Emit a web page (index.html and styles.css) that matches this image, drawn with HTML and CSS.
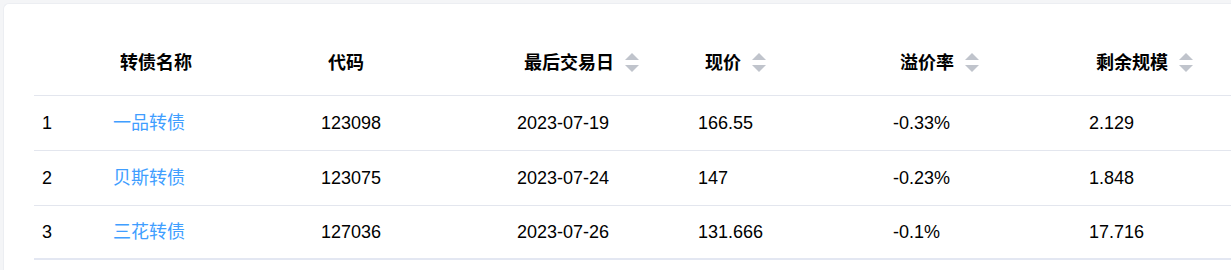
FILE: index.html
```html
<!DOCTYPE html>
<html lang="zh-CN">
<head>
<meta charset="utf-8">
<title>转债列表</title>
<link rel="stylesheet" href="styles.css">
</head>
<body>
<div class="card">
  <table class="bond-table">
    <colgroup>
      <col class="c-idx"><col class="c-name"><col class="c-code"><col class="c-date"><col class="c-price"><col class="c-prem"><col class="c-size">
    </colgroup>
    <thead>
      <tr>
        <th></th>
        <th>转债名称</th>
        <th>代码</th>
        <th>最后交易日<svg class="sort" viewBox="0 0 14 19" width="14" height="19"><polygon points="7,0 14,7 0,7"/><polygon points="0,12 14,12 7,19"/></svg></th>
        <th>现价<svg class="sort" viewBox="0 0 14 19" width="14" height="19"><polygon points="7,0 14,7 0,7"/><polygon points="0,12 14,12 7,19"/></svg></th>
        <th>溢价率<svg class="sort" viewBox="0 0 14 19" width="14" height="19"><polygon points="7,0 14,7 0,7"/><polygon points="0,12 14,12 7,19"/></svg></th>
        <th>剩余规模<svg class="sort" viewBox="0 0 14 19" width="14" height="19"><polygon points="7,0 14,7 0,7"/><polygon points="0,12 14,12 7,19"/></svg></th>
      </tr>
    </thead>
    <tbody>
      <tr>
        <td>1</td><td><a class="bond-link" href="#">一品转债</a></td><td>123098</td><td>2023-07-19</td><td>166.55</td><td>-0.33%</td><td>2.129</td>
      </tr>
      <tr>
        <td>2</td><td><a class="bond-link" href="#">贝斯转债</a></td><td>123075</td><td>2023-07-24</td><td>147</td><td>-0.23%</td><td>1.848</td>
      </tr>
      <tr class="last">
        <td>3</td><td><a class="bond-link" href="#">三花转债</a></td><td>127036</td><td>2023-07-26</td><td>131.666</td><td>-0.1%</td><td>17.716</td>
      </tr>
    </tbody>
  </table>
</div>
</body>
</html>
```
FILE: styles.css
```css
html, body {
  margin: 0;
  padding: 0;
}
body {
  background: #f4f5f7;
  overflow: hidden;
  height: 270px;
  font-family: "Liberation Sans", "Noto Sans CJK SC", sans-serif;
  color: #111;
}
.card {
  margin: 3px 0 0 3px;
  width: 1228px;
  height: 267px;
  background: #fff;
  border: 1px solid #eceef2;
  border-right: none;
  border-bottom: none;
  border-radius: 6px 0 0 0;
  padding: 22px 0 0 30px;
  box-sizing: border-box;
}
.bond-table {
  border-collapse: collapse;
  table-layout: fixed;
  width: 1197px;
  font-size: 18px;
}
.c-idx { width: 71px; }
.c-name { width: 208px; }
.c-code { width: 196px; }
.c-date { width: 181px; }
.c-price { width: 195px; }
.c-prem { width: 196px; }
.c-size { width: 150px; }

.bond-table th {
  height: 69px;
  padding: 0 0 0 15px;
  text-align: left;
  font-weight: bold;
  color: #000;
  border-bottom: 1px solid #e3e6ee;
  white-space: nowrap;
  vertical-align: middle;
}
.bond-table td {
  height: 54px;
  padding: 0 0 0 8px;
  border-bottom: 1px solid #e3e6ee;
  color: #000;
  white-space: nowrap;
  vertical-align: middle;
  line-height: 20px;
}
.bond-table tr.last td {
  height: 52px;
  border-bottom: 2px solid #e3e7f2;
}
.sort {
  fill: #c0c4cc;
  margin-left: 11px;
  vertical-align: -3px;
}
.bond-link {
  color: #409eff;
  text-decoration: none;
}
```
